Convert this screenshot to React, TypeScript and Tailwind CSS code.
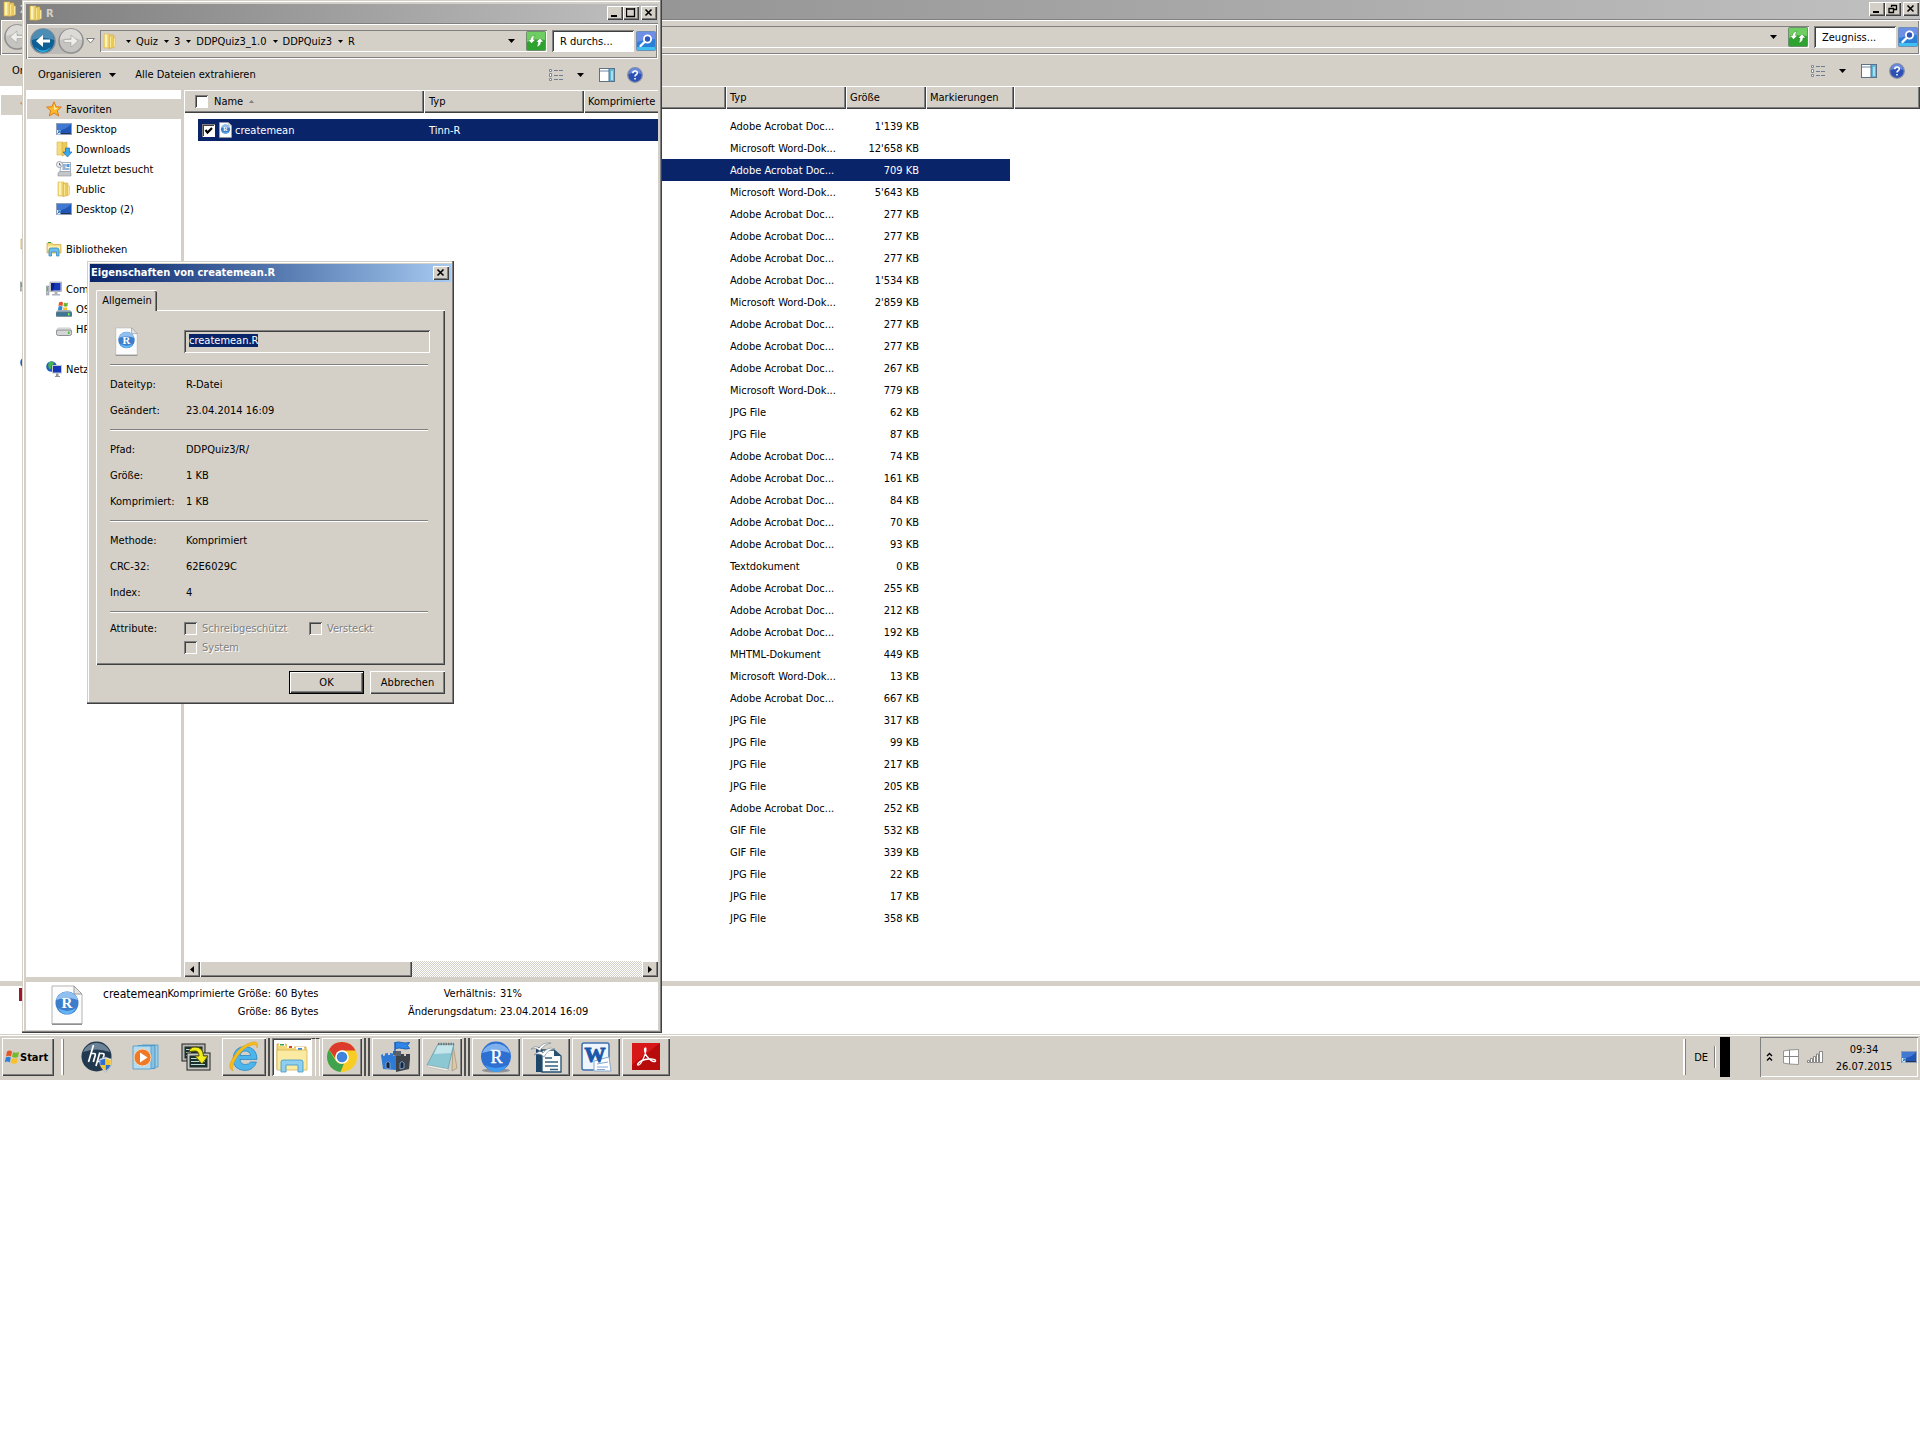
import { useEffect, useRef } from 'react';
import type { ReactNode } from 'react';

const DOC = 'Adobe Acrobat Doc...';
const WORD = 'Microsoft Word-Dok...';

const files = [
  [DOC, "1'139 KB"],
  [WORD, "12'658 KB"],
  [DOC, '709 KB'],
  [WORD, "5'643 KB"],
  [DOC, '277 KB'],
  [DOC, '277 KB'],
  [DOC, '277 KB'],
  [DOC, "1'534 KB"],
  [WORD, "2'859 KB"],
  [DOC, '277 KB'],
  [DOC, '277 KB'],
  [DOC, '267 KB'],
  [WORD, '779 KB'],
  ['JPG File', '62 KB'],
  ['JPG File', '87 KB'],
  [DOC, '74 KB'],
  [DOC, '161 KB'],
  [DOC, '84 KB'],
  [DOC, '70 KB'],
  [DOC, '93 KB'],
  ['Textdokument', '0 KB'],
  [DOC, '255 KB'],
  [DOC, '212 KB'],
  [DOC, '192 KB'],
  ['MHTML-Dokument', '449 KB'],
  [WORD, '13 KB'],
  [DOC, '667 KB'],
  ['JPG File', '317 KB'],
  ['JPG File', '99 KB'],
  ['JPG File', '217 KB'],
  ['JPG File', '205 KB'],
  [DOC, '252 KB'],
  ['GIF File', '532 KB'],
  ['GIF File', '339 KB'],
  ['JPG File', '22 KB'],
  ['JPG File', '17 KB'],
  ['JPG File', '358 KB'],
];

const raised = 'bg-[#d4d0c8] shadow-[inset_1px_1px_#fff,inset_-1px_-1px_#404040,inset_-2px_-2px_#808080]';
const sunken = 'shadow-[inset_1px_1px_#808080,inset_-1px_-1px_#fff,inset_2px_2px_#404040]';

/* ---------- Icons ---------- */

function FolderIcon() {
  return (
    <svg viewBox="0 0 16 16" className="w-4 h-4 shrink-0">
      <path d="M2 1h6v14H2z" fill="#f5dc7c" stroke="#d9b64c" strokeWidth=".6" />
      <path d="M3 1.500h2V14H3z" fill="#fdf3b8" />
      <path d="M7 2.500l4-.8 1 .8v12l-5 1z" fill="#ecca5a" stroke="#c9a23c" strokeWidth=".5" />
      <path d="M11.500 5h2v8.500l-2 1z" fill="#f7e59b" stroke="#d9b64c" strokeWidth=".5" />
      <path d="M8 3.500h1V14l-1 .5z" fill="#f9e794" />
    </svg>
  );
}

function DesktopIcon() {
  return (
    <svg viewBox="0 0 16 16" className="w-4 h-4 shrink-0">
      <rect x=".5" y="2.500" width="15" height="11" fill="#2256b4" stroke="#8ea0b8" />
      <path d="M1 3h14q-3 5-14 7z" fill="#4179d2" />
      <path d="M1 12h14v1H1z" fill="#24324e" />
      <path d="M1 9h3.500v4.500H1z" fill="#cfe6f5" />
      <path d="M1.500 12.500l2-2M2 10h2v2" stroke="#1769b5" fill="none" />
    </svg>
  );
}

function DownloadsIcon() {
  return (
    <svg viewBox="0 0 16 16" className="w-4 h-4 shrink-0">
      <path d="M1 1h6v13H1z" fill="#f5dc7c" stroke="#d9b64c" strokeWidth=".6" />
      <path d="M6 2l5-1v12l-5 2z" fill="#ecca5a" stroke="#c9a23c" strokeWidth=".5" />
      <path d="M9.500 7h4v4H16l-4.500 5L7 11h2.500z" fill="#3aa6ec" stroke="#1c6fb6" strokeWidth=".7" />
    </svg>
  );
}

function RecentIcon() {
  return (
    <svg viewBox="0 0 16 16" className="w-4 h-4 shrink-0">
      <path d="M5 1.500h9.500V11H4z" fill="#f7f9fb" stroke="#8f9ba8" strokeWidth=".8" />
      <path d="M7 4h3M6.500 6h3M6.500 8h7" stroke="#3b6ea5" />
      <rect x="10.500" y="3" width="3" height="3" fill="#4f9be0" />
      <path d="M2 12l2-1.500h9.500L15 12v3H2z" fill="#c3c7cb" stroke="#8a9096" strokeWidth=".6" />
      <circle cx="3.500" cy="3.500" r="3" fill="#eef2f6" stroke="#8f9ba8" strokeWidth=".9" />
      <path d="M3.500 2v2H5" stroke="#444" strokeWidth=".8" fill="none" />
    </svg>
  );
}

function StarIcon() {
  return (
    <svg viewBox="0 0 16 16" className="w-4 h-4 shrink-0">
      <path d="M8 .8l2.100 4.900 5.300.4-4.100 3.500 1.400 5.400L8 12.100 3.300 15l1.400-5.400L.6 6.100l5.300-.4z" fill="#fbb829" stroke="#e07a1c" />
      <path d="M8 3l1.200 3.800L12 7.200 8 9z" fill="#fff0a0" />
    </svg>
  );
}

function LibraryIcon() {
  return (
    <svg viewBox="0 0 16 16" className="w-4 h-4 shrink-0">
      <path d="M1 2h5l1 1.500h8V12H1z" fill="#f5dc7c" stroke="#cfa740" strokeWidth=".7" />
      <path d="M2 1.500h3" stroke="#3a9c3a" />
      <path d="M2 5h12v4H2z" fill="#fdf0b0" />
      <path d="M3 15V9q0-2 2-2h6q2 0 2 2v6h-2.500v-4h-5v4z" fill="#6cbdec" stroke="#2b83bd" strokeWidth=".7" />
    </svg>
  );
}

function ComputerIcon() {
  return (
    <svg viewBox="0 0 16 16" className="w-4 h-4 shrink-0">
      <rect x="0" y="5" width="3" height="9" fill="#b9bec4" stroke="#7d848c" strokeWidth=".5" />
      <rect x=".8" y="6" width="1.200" height="4" fill="#5cb84c" />
      <rect x="4" y="1" width="11.500" height="9.500" fill="#d4d8dc" stroke="#8a9199" strokeWidth=".6" />
      <rect x="5" y="2" width="9.500" height="7.500" fill="#1638b8" />
      <path d="M5 2h4L7 9.500H5z" fill="#0a1f86" />
      <path d="M8.500 11h3v2H14v1.500H6V13h2.500z" fill="#aeb4ba" />
    </svg>
  );
}

function OsDriveIcon() {
  return (
    <svg viewBox="0 0 16 16" className="w-4 h-4 shrink-0">
      <path d="M3 1.500q2-1.500 4 0L6.500 5q-2-1-4 0z" fill="#e8502a" />
      <path d="M8 1.500q2 1.500 4 0L11.500 5q-2 1.500-4 0z" fill="#6bb52e" />
      <path d="M2.500 5.500q2-1 4 0L6 9H2z" fill="#2f86d6" />
      <path d="M7.300 6q2 1.300 4 0L11 9H7z" fill="#f6be27" />
      <path d="M2 9h12l2 2H0z" fill="#9db3bf" />
      <rect x="0" y="11" width="16" height="4.500" rx="1" fill="#3f7691" stroke="#6c7d86" strokeWidth=".6" />
      <rect x="12" y="12" width="1.500" height="2.500" fill="#7ef05a" />
    </svg>
  );
}

function DriveIcon() {
  return (
    <svg viewBox="0 0 16 16" className="w-4 h-4 shrink-0">
      <path d="M2 7h12l2 3H0z" fill="#eceded" stroke="#9a9d9f" strokeWidth=".5" />
      <rect x=".4" y="9" width="15.200" height="5.500" rx="2" fill="#d3d5d6" stroke="#75797b" strokeWidth=".8" />
      <rect x="12" y="10.500" width="1.500" height="2.500" fill="#45b83a" />
    </svg>
  );
}

function NetworkIcon() {
  return (
    <svg viewBox="0 0 16 16" className="w-4 h-4 shrink-0">
      <circle cx="5.500" cy="5.500" r="5.300" fill="#1f5fc0" />
      <path d="M3 1.500q3-2 5 0-1 3-3 3 1 3-1 4-3-3-1-7z" fill="#45b64a" />
      <rect x="6.500" y="4.500" width="9" height="7.500" fill="#1638b8" stroke="#c2c8ce" />
      <path d="M10 12.500h2.500V15H14v1H9v-1h1z" fill="#8d949b" />
    </svg>
  );
}

function RFileIcon({ className }: { className: string }) {
  return (
    <svg viewBox="0 0 32 40" className={className}>
      <path d="M1 1h22l8 8v30H1z" fill="#fcfcfc" stroke="#b4b4b4" />
      <path d="M23 1v8h8z" fill="#e4e4e4" stroke="#9c9c9c" />
      <path d="M1 39.200h30" stroke="#8c8c8c" strokeWidth="1.500" />
      <circle cx="16" cy="18" r="11.500" fill="#3c7ecb" />
      <path d="M5 15a11.500 11.500 0 0 1 22 0q-11-4-22 0z" fill="#8fc0f0" />
      <path d="M7 23q9 6 18 0-3 6-9 6t-9-6z" fill="#62b4f4" />
      <text x="16" y="23" textAnchor="middle" fontSize="15" fontWeight="bold" fill="#fff" fontFamily="Liberation Serif, serif">R</text>
    </svg>
  );
}

function RefreshIcon() {
  return (
    <svg viewBox="0 0 20 20" className="w-5 h-5 shrink-0">
      <rect x=".5" y=".5" width="19" height="19" rx="1" fill="#2fa32f" stroke="#6d8f6d" />
      <path d="M1 1h18v8Q10 7 1 11z" fill="#6fce62" />
      <path d="M5.500 12.500L2 8.500h2.500Q4.500 5 9 4q-1.500 2-1.500 4.500H9.500zM14 7l3.500 4H15q0 4-4.500 5 1.500-2 1.500-5h-2z" fill="#fff" stroke="#1c7a1c" strokeWidth=".4" />
    </svg>
  );
}

function SearchIcon() {
  return (
    <svg viewBox="0 0 20 20" className="w-5 h-5 shrink-0">
      <rect x=".5" y=".5" width="19" height="19" rx="1" fill="#2b7fd8" stroke="#6f8fb8" />
      <path d="M1 1h18v7Q10 8 1 11z" fill="#6d8fe6" />
      <path d="M1 16h18v3H1z" fill="#3fc0ee" />
      <circle cx="11.500" cy="8" r="3.600" fill="#2e56bd" stroke="#fff" strokeWidth="1.800" />
      <path d="M8.500 11L4.500 15" stroke="#fff" strokeWidth="2.400" strokeLinecap="round" />
    </svg>
  );
}

function BackIcon() {
  return (
    <svg viewBox="0 0 26 26" className="w-[26px] h-[26px]">
      <circle cx="13" cy="13" r="12" fill="#0d5f96" stroke="#7c8c98" strokeWidth="1.500" />
      <path d="M2 12a11 11 0 0 1 22 0q-11-4-22 0z" fill="#4b8db5" />
      <path d="M5 19q8 7 16 0-3 5-8 5t-8-5z" fill="#28b4e8" />
      <path d="M13 7l-7 6 7 6v-4.500h7v-3h-7z" fill="#fff" />
    </svg>
  );
}

function GreyArrowIcon({ back }: { back?: boolean }) {
  return (
    <svg viewBox="0 0 26 26" className="w-[26px] h-[26px]">
      <circle cx="13" cy="13" r="12" fill="#c6c4c0" stroke="#8f8f8f" strokeWidth="1.500" />
      <path d="M2 12a11 11 0 0 1 22 0q-11-4-22 0z" fill="#dcdad6" />
      {back ? (
        <path d="M13 7l-7 6 7 6v-4.500h7v-3h-7z" fill="#efeeec" stroke="#a8a6a2" strokeWidth=".7" />
      ) : (
        <path d="M13 7l7 6-7 6v-4.500H6v-3h7z" fill="#efeeec" stroke="#a8a6a2" strokeWidth=".7" />
      )}
    </svg>
  );
}

function Triangle() {
  return (
    <svg viewBox="0 0 7 4" className="w-[7px] h-1 shrink-0">
      <path d="M0 0h7L3.500 4z" />
    </svg>
  );
}

function ViewIcon() {
  return (
    <svg viewBox="0 0 16 14" className="w-4 h-[14px]" fill="none">
      <path d="M1.500 1.500h2v2h-2zM1.500 5.500h2v3h-2zM1.500 10.500h2v2h-2z" fill="#fff" stroke="#7b8794" />
      <path d="M6 2.500h4M11 2.500h4M6 7.500h4M11 7.500h4M6 11.500h4M11 11.500h4" stroke="#6d7d92" />
    </svg>
  );
}

function PaneIcon() {
  return (
    <svg viewBox="0 0 16 14" className="w-4 h-[14px]">
      <rect x=".5" y=".5" width="15" height="13" fill="#fff" stroke="#5c7187" />
      <path d="M1 3h14" stroke="#6c88a8" />
      <rect x="10" y="1" width="5" height="12" fill="#5fb7d6" />
      <path d="M10 1v12" stroke="#4b6c88" />
      <path d="M12 3h2v9h-2z" fill="#a9deee" />
    </svg>
  );
}

function HelpIcon() {
  return (
    <svg viewBox="0 0 16 16" className="w-4 h-4">
      <circle cx="8" cy="8" r="7.300" fill="#2c50b4" stroke="#8490a8" strokeWidth="1.300" />
      <path d="M2 7a6 6 0 0 1 12 0q-6-3-12 0z" fill="#6a8ce0" />
      <path d="M5.800 6.200q0-2.200 2.300-2.200t2.200 2q0 1-1.200 1.700Q8 8.300 8 9.500M8 11v1.600" fill="none" stroke="#fff" strokeWidth="1.600" />
    </svg>
  );
}

/* ---------- Window parts ---------- */

function CaptionButton({ kind }: { kind: 'min' | 'max' | 'restore' | 'close' }) {
  return (
    <button aria-label={kind} className={`w-4 h-[14px] flex items-center justify-center ${raised}`}>
      <svg viewBox="0 0 10 10" className="w-[10px] h-[10px]" fill="none" stroke="#000">
        {kind === 'min' && <path d="M1 8h6" strokeWidth="2" />}
        {kind === 'max' && <path d="M.5 1h8M.5 0v8.500h8V0" strokeWidth="1.300" />}
        {kind === 'restore' && <path d="M3 1.500h5.500M3.500 1v2M8.500 1v4.500H6M.5 4.500h5.500M1 4v4.500h4.500V4" strokeWidth="1.300" />}
        {kind === 'close' && <path d="M1.500 1.500l6 6M7.500 1.500l-6 6" strokeWidth="1.600" />}
      </svg>
    </button>
  );
}

function TitleBar({ title, maxed }: { title: string; maxed?: boolean }) {
  return (
    <div className="h-[19px] shrink-0 flex items-center bg-linear-to-r from-[#808080] to-[#c0c0c0] pl-[2px] pr-px pb-px text-[#d4d0c8] font-bold">
      <FolderIcon />
      <span className="ml-[2px] flex-1">{title}</span>
      <CaptionButton kind="min" />
      <CaptionButton kind={maxed ? 'restore' : 'max'} />
      <span className="w-[2px]" />
      <CaptionButton kind="close" />
    </div>
  );
}

function AddressBar({ crumbs, search, active }: { crumbs: string[]; search: string; active?: boolean }) {
  return (
    <div className="h-9 shrink-0 flex items-center pl-1 pr-[2px] shadow-[inset_1px_1px_#808080,inset_2px_2px_#fff,inset_-1px_-1px_#fff,inset_-2px_-2px_#808080]">
      <div className="flex items-center w-[54px] rounded-full bg-[#bdbbb7]">
        <button aria-label="Zurück">{active ? <BackIcon /> : <GreyArrowIcon back />}</button>
        <button aria-label="Vorwärts" className="ml-[2px]"><GreyArrowIcon /></button>
      </div>
      <svg viewBox="0 0 9 6" className="w-[9px] h-[6px] ml-[2px] mr-[5px]">
        <path d="M.5.5h8L4.500 5z" fill="#fff" stroke="#808080" />
      </svg>
      <div className="h-[22px] flex-1 flex items-center pl-[2px] pr-px shadow-[inset_1px_1px_#808080,inset_-1px_-1px_#fff]">
        {crumbs.length > 0 && <FolderIcon />}
        <span className="w-[2px]" />
        {crumbs.map((crumb) => (
          <button key={crumb} className="flex items-center whitespace-nowrap">
            <svg viewBox="0 0 5 3" className="w-[5px] h-[3px] ml-[6px] mr-[5px]">
              <path d="M0 0h5L2.500 3z" />
            </svg>
            {crumb}
          </button>
        ))}
        <span className="flex-1" />
        <button aria-label="Verlauf" className="mr-[11px]"><Triangle /></button>
        <button aria-label="Aktualisieren"><RefreshIcon /></button>
      </div>
      <input
        aria-label="Suchen"
        defaultValue={search}
        className={`w-[82px] h-[22px] ml-[5px] mr-[2px] pl-2 bg-white outline-none ${sunken}`}
      />
      <button aria-label="Suche starten"><SearchIcon /></button>
    </div>
  );
}

function CommandBar({ extract }: { extract?: boolean }) {
  return (
    <div className="h-[31px] shrink-0 flex items-center pl-3 pr-[15px]">
      <button className="flex items-center gap-2">Organisieren <Triangle /></button>
      {extract && <button className="ml-[19px]">Alle Dateien extrahieren</button>}
      <span className="flex-1" />
      <button aria-label="Ansicht"><ViewIcon /></button>
      <button aria-label="Weitere Optionen" className="ml-[13px]"><Triangle /></button>
      <button aria-label="Vorschaufenster" className="ml-[15px]"><PaneIcon /></button>
      <button aria-label="Hilfe" className="ml-3"><HelpIcon /></button>
    </div>
  );
}

const navItems: { icon: ReactNode; label: string; sub?: boolean; gap?: boolean }[] = [
  { icon: <StarIcon />, label: 'Favoriten' },
  { icon: <DesktopIcon />, label: 'Desktop', sub: true },
  { icon: <DownloadsIcon />, label: 'Downloads', sub: true },
  { icon: <RecentIcon />, label: 'Zuletzt besucht', sub: true },
  { icon: <FolderIcon />, label: 'Public', sub: true },
  { icon: <DesktopIcon />, label: 'Desktop (2)', sub: true },
  { icon: <LibraryIcon />, label: 'Bibliotheken', gap: true },
  { icon: <ComputerIcon />, label: 'Computer', gap: true },
  { icon: <OsDriveIcon />, label: 'OS (C:)', sub: true },
  { icon: <DriveIcon />, label: 'HP_RECOVERY', sub: true },
  { icon: <NetworkIcon />, label: 'Netzwerk', gap: true },
];

function NavPane({ labels }: { labels?: boolean }) {
  return (
    <nav className="w-[155px] shrink-0 bg-white pt-[9px] overflow-hidden">
      {navItems.map((item, i) => (
        <div
          key={item.label}
          className={`h-5 ml-px flex items-center gap-1 ${item.sub ? 'pl-[29px]' : 'pl-[19px]'} ${item.gap ? 'mt-5' : ''} ${i === 0 ? 'bg-[#d4d0c8]' : ''}`}
        >
          {item.icon}
          {labels && <a href="#" className="whitespace-nowrap">{item.label}</a>}
        </div>
      ))}
    </nav>
  );
}

function BackWindow() {
  return (
    <section className="h-[1034px] flex flex-col bg-[#d4d0c8]">
      <TitleBar title="Z" maxed />
      <AddressBar crumbs={[]} search="Zeugniss..." />
      <CommandBar />
      <div className="flex-1 flex">
        <NavPane />
        <div className="flex-1 ml-[3px] bg-white">
          <table className="w-full table-fixed border-separate border-spacing-0">
            <colgroup>
              <col className="w-[568px]" />
              <col className="w-[120px]" />
              <col className="w-20" />
              <col className="w-[88px]" />
              <col />
            </colgroup>
            <thead>
              <tr className="h-[23px] text-left">
                <th className={raised} />
                <th className={`pl-1 font-normal ${raised}`}>Typ</th>
                <th className={`pl-1 font-normal ${raised}`}>Größe</th>
                <th className={`pl-1 font-normal ${raised}`}>Markierungen</th>
                <th className={raised} />
              </tr>
            </thead>
            <tbody>
              <tr className="h-[6px]" />
              {files.map(([type, size], i) => {
                const cell = i === 2 ? 'bg-[#0a246a] text-white' : '';
                return (
                  <tr key={i} className="h-[22px]">
                    <td className={cell} />
                    <td className={`pl-1 whitespace-nowrap ${cell}`}>{type}</td>
                    <td className={`pr-[7px] text-right whitespace-nowrap ${cell}`}>{size}</td>
                    <td className="pr-1"><div className={`h-[22px] ${cell}`} /></td>
                    <td />
                  </tr>
                );
              })}
            </tbody>
          </table>
        </div>
      </div>
      <div className="h-[53px] border-t-[5px] border-[#d4d0c8] bg-white pl-[19px] pt-[2px]">
        <div className="w-8 h-[13px] bg-[#a3142b]" />
      </div>
    </section>
  );
}

function ScrollBar() {
  return (
    <div className="h-4 flex bg-[conic-gradient(#fff_25%,#d4d0c8_0_50%,#fff_0_75%,#d4d0c8_0)] bg-[length:2px_2px]">
      <button aria-label="Nach links" className={`w-4 flex items-center justify-center ${raised}`}>
        <svg viewBox="0 0 4 7" className="w-1 h-[7px]"><path d="M4 0v7L0 3.500z" /></svg>
      </button>
      <div className={`w-[212px] ${raised}`} />
      <span className="flex-1" />
      <button aria-label="Nach rechts" className={`w-4 flex items-center justify-center ${raised}`}>
        <svg viewBox="0 0 4 7" className="w-1 h-[7px]"><path d="M0 0v7l4-3.500z" /></svg>
      </button>
    </div>
  );
}

const box = `appearance-none w-[13px] h-[13px] shrink-0 ${sunken}`;

function FrontWindow() {
  return (
    <section className="absolute top-0 left-[22px] w-[640px] h-[1033px] flex flex-col p-1 pb-[3px] bg-[#d4d0c8] shadow-[inset_-1px_-1px_#404040,inset_-2px_-2px_#808080,inset_1px_1px_#d4d0c8,inset_2px_2px_#fff]">
      <TitleBar title="R" />
      <AddressBar crumbs={['Quiz', '3', 'DDPQuiz3_1.0', 'DDPQuiz3', 'R']} search="R durchs..." active />
      <CommandBar extract />
      <div className="flex-1 flex mb-[5px]">
        <NavPane labels />
        <div className="flex-1 ml-[3px] min-w-0 flex flex-col bg-white overflow-hidden">
          <table className="w-full table-fixed border-separate border-spacing-0">
            <colgroup>
              <col className="w-60" />
              <col className="w-40" />
              <col />
            </colgroup>
            <thead>
              <tr className="h-[23px] text-left whitespace-nowrap">
                <th className={`font-normal ${raised}`}>
                  <div className="flex items-center pl-[11px]">
                    <input type="checkbox" aria-label="Alle auswählen" className={`bg-white ${box}`} />
                    <span className="ml-[6px]">Name</span>
                    <svg viewBox="0 0 5 3" className="w-[5px] h-[3px] ml-[6px]"><path d="M0 3h5L2.500 0z" fill="#808080" /></svg>
                  </div>
                </th>
                <th className={`pl-[5px] font-normal ${raised}`}>Typ</th>
                <th className="pl-1 font-normal overflow-hidden bg-[#d4d0c8] shadow-[inset_1px_1px_#fff,inset_0_-1px_#404040,inset_0_-2px_#808080]">Komprimierte Größe</th>
              </tr>
            </thead>
            <tbody>
              <tr className="h-[6px]" />
              <tr className="h-[22px] text-white">
                <td className="pl-[14px]">
                  <label className="h-[22px] flex items-center pl-1 bg-[#0a246a]">
                    <span className="relative flex">
                      <input type="checkbox" defaultChecked className={`bg-white ${box}`} />
                      <svg viewBox="0 0 13 13" className="absolute inset-0 w-[13px] h-[13px]">
                        <path d="M3.500 6L5.500 8.500 10 4" fill="none" stroke="#000" strokeWidth="2.200" />
                      </svg>
                    </span>
                    <RFileIcon className="w-[13px] h-4 ml-1" />
                    <span className="ml-[3px]">createmean</span>
                  </label>
                </td>
                <td className="pl-[5px] bg-[#0a246a]">Tinn-R</td>
                <td className="bg-[#0a246a]" />
              </tr>
            </tbody>
          </table>
          <span className="flex-1" />
          <ScrollBar />
        </div>
      </div>
      <div className="h-12 shrink-0 flex bg-white pl-[25px] pt-[3px] leading-[18px]">
        <RFileIcon className="w-8 h-10" />
        <span className="w-16 ml-5 text-[12px]">createmean</span>
        <div className="grid content-start grid-cols-[104px_129px_88px_auto] gap-x-1 text-right whitespace-nowrap">
          <span>Komprimierte Größe:</span>
          <span className="text-left">60 Bytes</span>
          <span>Verhältnis:</span>
          <span className="text-left">31%</span>
          <span>Größe:</span>
          <span className="text-left">86 Bytes</span>
          <span>Änderungsdatum:</span>
          <span className="text-left">23.04.2014 16:09</span>
        </div>
      </div>
    </section>
  );
}

/* ---------- Properties dialog ---------- */

const groups = [
  [['Dateityp:', 'R-Datei'], ['Geändert:', '23.04.2014 16:09']],
  [['Pfad:', 'DDPQuiz3/R/'], ['Größe:', '1 KB'], ['Komprimiert:', '1 KB']],
  [['Methode:', 'Komprimiert'], ['CRC-32:', '62E6029C'], ['Index:', '4']],
];

function Attribute({ label }: { label: string }) {
  return (
    <label className="flex items-center gap-[5px] text-[#808080] [text-shadow:1px_1px_#fff]">
      <input type="checkbox" disabled className={box} />
      {label}
    </label>
  );
}

function PropertiesDialog() {
  const nameRef = useRef<HTMLInputElement>(null);

  useEffect(() => {
    nameRef.current?.focus();
    nameRef.current?.select();
  }, []);

  return (
    <div role="dialog" className="absolute left-[87px] top-[261px] w-[367px] h-[443px] flex flex-col p-[3px] leading-[14px] bg-[#d4d0c8] shadow-[inset_-1px_-1px_#404040,inset_-2px_-2px_#808080,inset_1px_1px_#d4d0c8,inset_2px_2px_#fff]">
      <div className="h-[18px] shrink-0 flex items-center justify-between pl-px pr-[2px] bg-linear-to-r from-[#0a246a] to-[#a6caf0] text-white font-bold">
        Eigenschaften von createmean.R
        <CaptionButton kind="close" />
      </div>
      <div className="flex-1 flex flex-col px-[6px] pt-2 pb-[7px]">
        <button className="relative z-10 self-start w-[61px] h-[21px] -mb-px pb-px rounded-t-xs bg-[#d4d0c8] border-l border-t border-white shadow-[inset_-1px_0_#404040,inset_-2px_0_#808080]">
          Allgemein
        </button>
        <div className={`flex-1 px-[14px] pt-4 ${raised}`}>
          <div className="flex items-center h-[30px] pl-[5px]">
            <RFileIcon className="w-[23px] h-[29px]" />
            <input
              ref={nameRef}
              aria-label="Dateiname"
              defaultValue="createmean.R"
              className={`w-[246px] h-[23px] ml-[46px] pl-[5px] pb-[2px] leading-[14px] bg-transparent outline-none selection:bg-[#0a246a] selection:text-white ${sunken}`}
            />
          </div>
          <div className="w-[318px] h-[2px] mt-2 mb-[6px] border-t border-t-[#808080] border-b border-b-white" />
          {groups.map((rows, i) => (
            <div key={i}>
              {rows.map(([name, value]) => (
                <div key={name} className="h-[26px] flex items-center">
                  <span className="w-[76px]">{name}</span>
                  <span>{value}</span>
                </div>
              ))}
              <div className="w-[318px] h-[2px] mt-[5px] mb-[6px] border-t border-t-[#808080] border-b border-b-white" />
            </div>
          ))}
          <div className="flex pt-[2px] leading-[15px]">
            <span className="w-[74px]">Attribute:</span>
            <div className="w-[125px] flex flex-col gap-1">
              <Attribute label="Schreibgeschützt" />
              <Attribute label="System" />
            </div>
            <div>
              <Attribute label="Versteckt" />
            </div>
          </div>
        </div>
        <div className="flex justify-end gap-[6px] mt-[6px]">
          <button className="w-[75px] h-[23px] bg-[#d4d0c8] border border-black shadow-[inset_1px_1px_#fff,inset_-1px_-1px_#404040,inset_-2px_-2px_#808080]">OK</button>
          <button className={`w-[75px] h-[23px] ${raised}`}>Abbrechen</button>
        </div>
      </div>
    </div>
  );
}

/* ---------- Taskbar ---------- */

function WindowsFlag() {
  return (
    <svg viewBox="0 0 16 16" className="w-4 h-4">
      <path d="M3 2.500q2.500-2 5 0L7 7.500q-2.500-1.500-5 0z" fill="#e8542a" />
      <path d="M9 3q2.500 1.500 6 0l-1 5q-3 1.500-6-.3z" fill="#76b82e" />
      <path d="M1.800 8.500q2.500-1.500 5 0l-1 5q-2.500-1.800-5 0z" fill="#2f7fd6" />
      <path d="M7.800 9q2.500 1.500 6 0l-1 5q-3 1.500-6-.3z" fill="#f8c12a" />
    </svg>
  );
}

function HpIcon() {
  return (
    <svg viewBox="0 0 32 32" className="w-8 h-8">
      <circle cx="15.500" cy="15.500" r="15" fill="#22384e" />
      <path d="M2 11a14.500 14.500 0 0 1 27 0Q15 6 2 11z" fill="#6c8397" />
      <g fill="none" stroke="#fff" strokeWidth="1.700">
        <path d="M12.500 4L7.500 21M10 12.500h3q1.800 0 1.200 2L12.300 21" />
        <path d="M18.800 11.500L15 25M18.800 12.500h3q1.600 0 1.100 2l-1.200 4q-.5 1.800-2.200 1.800h-2.500" />
      </g>
      <path d="M24.500 16l6 2q1 8-6 13-7-5-6-13z" fill="#e8eef4" stroke="#7d8a96" strokeWidth=".5" />
      <path d="M24.500 17.500V24h-5q-.4-2-.2-5zM24.500 24H29.500q-1 3.500-5 6z" fill="#2f6fd0" />
      <path d="M24.500 17.500l5.200 1.500q.2 3-.2 5h-5zM24.500 24v6q-4-2.500-5-6z" fill="#f5c52c" />
    </svg>
  );
}

function MediaIcon() {
  return (
    <svg viewBox="0 0 30 28" className="w-[30px] h-7">
      <path d="M10 2h16v22H10z" fill="#9fd0ea" stroke="#5da3cc" />
      <path d="M6 2.500h17v23H6z" fill="#86c0e2" stroke="#4f96c2" />
      <path d="M1 3h18v23H1z" fill="#b5dcf1" stroke="#5da3cc" />
      <circle cx="10.500" cy="14.500" r="8.500" fill="#ee7a28" stroke="#fbd9b8" />
      <path d="M8 9.500v10l7.500-5z" fill="#fff" />
    </svg>
  );
}

function SwitchIcon() {
  return (
    <svg viewBox="0 0 30 28" className="w-[30px] h-7">
      <rect x="1" y="1" width="23" height="17" fill="#b8b8b0" stroke="#222" />
      <rect x="3.500" y="3.500" width="18" height="12" fill="#1c3030" />
      <path d="M5 6.500h6M5 9.500h5M5 12.500h6" stroke="#b8dcd0" />
      <rect x="6" y="10" width="23" height="17" fill="#c8c8c0" stroke="#222" />
      <rect x="8.500" y="12.500" width="18" height="12" fill="#1c3030" />
      <path d="M10 15.500h14M10 18.500h14M10 21.500h14" stroke="#b8dcd0" />
      <path d="M8 9Q9 4 14 4q8 0 8.500 9H27l-6 8-7-8h4q0-5-4-5-3 0-6 1z" fill="#f4ee1c" stroke="#5a5600" />
    </svg>
  );
}

function IeIcon() {
  return (
    <svg viewBox="0 0 32 32" className="w-8 h-8">
      <path d="M29 18.500H12q.5 5 5.500 5 3.500 0 5-2.500h6q-3 8.500-11.500 8.500Q5 29 5 17.500 6 5.500 17.500 5.500q11.500 1 11.500 13zM12 14.500h10.500q-.8-4.500-5.200-4.500T12 14.500z" fill="#4db5ea" stroke="#1f7fc0" strokeWidth=".7" />
      <path d="M8 12q4-6 11-5-7-1-11 5z" fill="#c4ecfb" />
      <path d="M5 30Q-2 27 6 15 14 3 25 1q6-1 4 6 0-4-5-3-8 2-15 12-6 10-4 14z" fill="#f7bb1c" stroke="#d79408" strokeWidth=".4" />
    </svg>
  );
}

function ExplorerIcon() {
  return (
    <svg viewBox="0 0 32 32" className="w-8 h-8">
      <path d="M1 3h9l2 3h18v22H1z" fill="#f4d878" stroke="#c9a040" strokeWidth=".8" />
      <path d="M3 2h6v3H3z" fill="#fff" /><path d="M4 3h4v1.500H4z" fill="#35a03a" />
      <path d="M11 4h7v3h-7z" fill="#fff" /><path d="M13 5h3v2h-3z" fill="#d8422a" />
      <path d="M20 6h8v3h-8z" fill="#fff" /><path d="M22 7h4v2h-4z" fill="#3b86d8" />
      <path d="M1 9h30v20H1z" fill="#fbeaa2" stroke="#d6b252" strokeWidth=".8" />
      <path d="M5 31V21q0-2 2-2h18q2 0 2 2v10h-5v-7H10v7z" fill="#8ecff0" stroke="#3f94c6" strokeWidth=".8" />
    </svg>
  );
}

function ChromeIcon() {
  return (
    <svg viewBox="0 0 32 32" className="w-8 h-8">
      <circle cx="16" cy="16" r="15" fill="#f8cd23" />
      <path d="M3 8.500A15 15 0 0 1 29.500 9.500H16a6.500 6.500 0 0 0-6.200 8.500z" fill="#dc3a2c" />
      <path d="M3 8.500L10 20q2.500 4 8 2.500L14.500 31A15 15 0 0 1 3 8.500z" fill="#3fa34d" />
      <circle cx="16" cy="16" r="6.800" fill="#fff" />
      <circle cx="16" cy="16" r="5.300" fill="#3f83dc" />
    </svg>
  );
}

function CastleIcon() {
  return (
    <svg viewBox="0 0 32 32" className="w-8 h-8">
      <path d="M1 14l2-1v2l2-.5v-2l3-.5v2h2v-2l3 .5v2l3 .5v14L3 28z" fill="#2f7ad6" />
      <path d="M16 15v-2h3v2h2v-2h3v2h2v-2h4v5l-1 10-13 3z" fill="#3e434a" />
      <path d="M13 10h8v5h-5l-3-1z" fill="#59616b" />
      <path d="M15 1v11" stroke="#1e62b4" strokeWidth="1.500" />
      <path d="M15.500 1.500q3-1 6 0t8 0l-2 3 2 3q-4 1-7 0t-7 0z" fill="#2f86e8" stroke="#1e62b4" />
      <path d="M6 27v-5q2-3 4 0v6zM20 28v-6q2-3 4 0v5z" fill="#14263e" stroke="#8fb4e0" strokeWidth=".8" />
    </svg>
  );
}

function NotepadIcon() {
  return (
    <svg viewBox="0 0 32 32" className="w-8 h-8">
      <path d="M27 4l4 23-5 3z" fill="#d8c8a8" stroke="#9a8a6a" strokeWidth=".6" />
      <path d="M12 3h16l-6 25-21-4z" fill="#8cc8d4" stroke="#5a98a8" strokeWidth=".7" />
      <path d="M12 4h15l-2 8-17 1z" fill="#c4e6ea" />
      <path d="M1 24l21 4v2L2 26z" fill="#f5f5f0" stroke="#a8a8a0" strokeWidth=".5" />
      <path d="M12 3h16" stroke="#777" strokeWidth="2.500" strokeDasharray="1.500 1" />
    </svg>
  );
}

function RStudioIcon() {
  return (
    <svg viewBox="0 0 32 32" className="w-8 h-8">
      <ellipse cx="16" cy="29.500" rx="14" ry="2" fill="#8f9298" />
      <circle cx="16" cy="15.500" r="15" fill="#2e6fd2" />
      <path d="M2 12a15 15 0 0 1 28 0q-14-5-28 0z" fill="#7eb0ee" />
      <path d="M5 24q11 6 22 0-4 7-11 7T5 24z" fill="#3f9cf2" />
      <text x="16.500" y="21.500" textAnchor="middle" fontSize="18" fill="#fff" stroke="#fff" strokeWidth=".4" fontFamily="Liberation Serif, serif">R</text>
    </svg>
  );
}

function OfficeIcon() {
  return (
    <svg viewBox="0 0 32 32" className="w-8 h-8">
      <path d="M6 6h6v25H6z" fill="#1d4668" />
      <path d="M12 9h12l7 6v16H12z" fill="#fbfbfb" stroke="#26506f" strokeWidth="1.300" />
      <path d="M24 9v6h7z" fill="#26506f" />
      <path d="M15 17h7M15 21h13M15 25h13M20 28.500h8" stroke="#35617f" strokeWidth="1.600" />
      <path d="M1 8q5-4 8-1 4-6 12-5-7 1-11 8Q6 6 1 8zM4 14q6-6 9-2 5-7 12-4-7 0-11 8-4-5-10-2z" fill="#fff" stroke="#6a7c88" strokeWidth=".6" />
    </svg>
  );
}

function WordIcon() {
  return (
    <svg viewBox="0 0 32 32" className="w-8 h-8">
      <rect x="2" y="2" width="27" height="27" rx="2" fill="#eef5fc" stroke="#3f70b0" strokeWidth="1.500" />
      <path d="M14 20l15-4 2 14H14z" fill="#fff" stroke="#88a8cc" />
      <path d="M17 23l11-2M17 26h11M17 28.500h8" stroke="#84a8d4" />
      <text x="15" y="21" textAnchor="middle" fontSize="21" fontWeight="bold" fill="#1b56a8" stroke="#1b56a8" fontFamily="Liberation Serif, serif">W</text>
    </svg>
  );
}

function AcrobatIcon() {
  return (
    <svg viewBox="0 0 32 32" className="w-8 h-8">
      <rect x="2" y="2" width="28" height="27" fill="#b80c0c" />
      <path d="M2 2h28L2 24z" fill="#d81818" />
      <path d="M15.500 7c-2 0-.5 6 1.500 8.500s5.500 5.500 8 5c2-1-1-3-6-2.500s-9.500 2.500-11 4.500 1 2.500 3-.5c2.300-4 4.200-8.500 4.700-11.500.3-2.300.2-3.500-.2-3.500z" fill="none" stroke="#fff" strokeWidth="1.300" />
    </svg>
  );
}

const tasks: { name: string; icon: ReactNode; extra: number; pressed?: boolean }[] = [
  { name: 'Internet Explorer', icon: <IeIcon />, extra: 1 },
  { name: 'Windows-Explorer', icon: <ExplorerIcon />, extra: 2, pressed: true },
  { name: 'Google Chrome', icon: <ChromeIcon />, extra: 2 },
  { name: 'Security Essentials', icon: <CastleIcon />, extra: 0 },
  { name: 'Editor', icon: <NotepadIcon />, extra: 2 },
  { name: 'RStudio', icon: <RStudioIcon />, extra: 0 },
  { name: 'OpenOffice', icon: <OfficeIcon />, extra: 0 },
  { name: 'Word', icon: <WordIcon />, extra: 0 },
  { name: 'Acrobat', icon: <AcrobatIcon />, extra: 0 },
];

function Taskbar() {
  return (
    <footer className="h-[46px] flex items-center px-[2px] bg-[#d4d0c8] shadow-[inset_0_1px_#d4d0c8,inset_0_2px_#fff]">
      <button className={`w-[52px] h-[38px] flex items-center pl-[2px] font-bold ${raised}`}>
        <WindowsFlag />
        Start
      </button>
      <span className="w-[3px] h-9 ml-[7px] bg-white border-r border-[#808080]" />
      <button aria-label="HP" className="ml-[17px]"><HpIcon /></button>
      <button aria-label="Media Player" className="ml-[19px]"><MediaIcon /></button>
      <button aria-label="Fenster wechseln" className="ml-[19px] mr-[11px]"><SwitchIcon /></button>
      <div className="flex gap-[2px]">
        {tasks.map((task) => (
          <button key={task.name} aria-label={task.name} className="w-12 h-[38px] flex">
            <span className={`flex-1 h-full flex items-center justify-center ${task.pressed ? `bg-white ${sunken}` : raised}`}>
              {task.icon}
            </span>
            {Array.from({ length: task.extra }, (_, i) => (
              <span
                key={i}
                className={`w-1 h-full ${task.pressed ? 'border-r border-white border-t border-t-[#404040]' : 'border-r-2 border-[#505050]'}`}
              />
            ))}
          </button>
        ))}
      </div>
      <span className="flex-1" />
      <span className="w-[3px] h-9 bg-white border-r border-[#808080]" />
      <span className="ml-2">DE</span>
      <span className="w-[2px] h-[22px] ml-[6px] bg-[#808080] border-r border-white" />
      <span className="w-[10px] h-10 ml-1 bg-black" />
      <div className="w-[158px] h-10 ml-[30px] pl-[6px] pr-px flex items-center shadow-[inset_1px_1px_#808080,inset_-1px_-1px_#fff]">
        <svg viewBox="0 0 7 10" className="w-[7px] h-[10px]" fill="none" stroke="#000" strokeWidth="1.400">
          <path d="M1 4l2.500-2.500L6 4M1 8.500L3.500 6 6 8.500" />
        </svg>
        <svg viewBox="0 0 16 16" className="w-4 h-4 ml-[10px]">
          <path d="M.5 2l6-1v6.500h-6zM6.500 1l9-.5v7h-9zM.5 7.500h6V15l-6-1zM6.500 7.500h9v8l-9-.5z" fill="#fff" stroke="#808080" strokeWidth=".8" />
        </svg>
        <svg viewBox="0 0 16 12" className="w-4 h-3 ml-2">
          <path d="M.5 9.500h2v2h-2zM3.500 7.500h2v4h-2zM6.500 5.500h2v6h-2zM9.500 3h2v8.500h-2zM12.500.5h3v11h-3z" fill="#fff" stroke="#707070" strokeWidth=".8" />
        </svg>
        <div className="flex-1 pl-1 pt-[2px] text-center leading-[17px]">
          <div>09:34</div>
          <div>26.07.2015</div>
        </div>
        <DesktopIcon />
      </div>
    </footer>
  );
}

export default function App() {
  return (
    <main className="min-h-screen bg-white text-black text-[11px] leading-[15px] font-['DejaVu_Sans_Condensed','DejaVu_Sans',sans-serif]">
      <div className="relative overflow-hidden">
        <BackWindow />
        <FrontWindow />
        <PropertiesDialog />
      </div>
      <Taskbar />
    </main>
  );
}
